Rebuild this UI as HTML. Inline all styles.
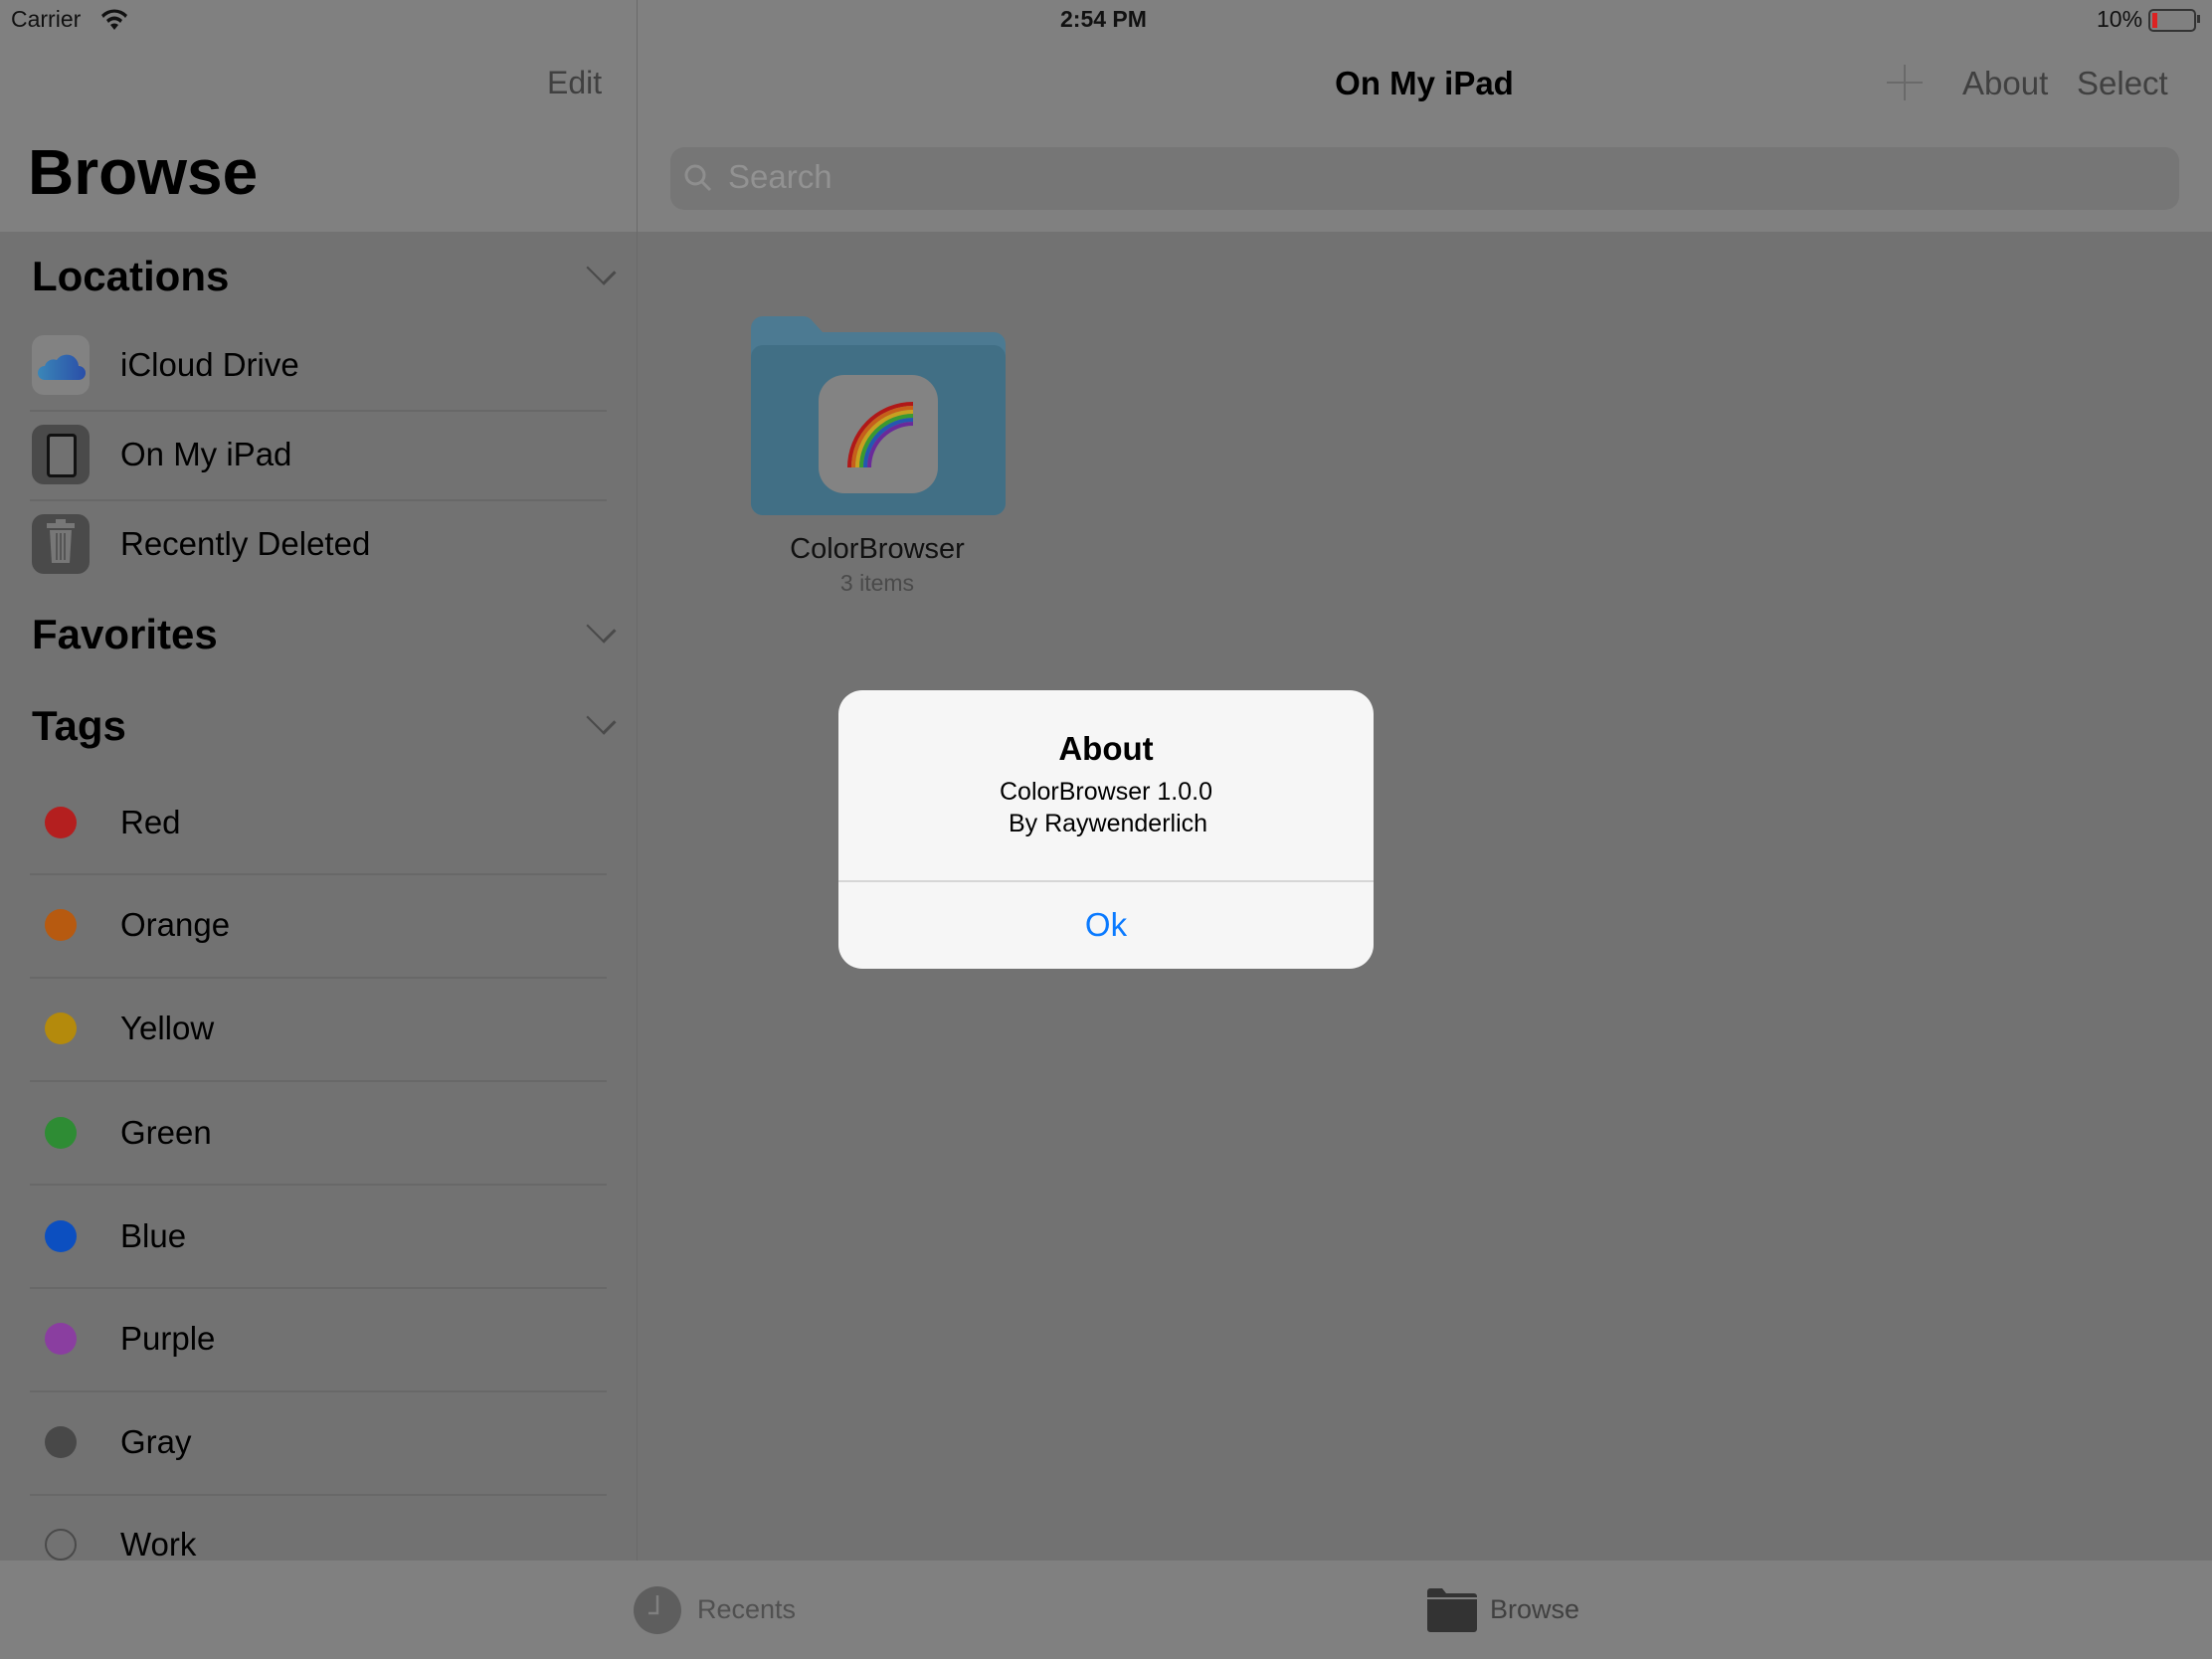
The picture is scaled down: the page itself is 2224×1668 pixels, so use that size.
<!DOCTYPE html>
<html><head><meta charset="utf-8"><style>
body{margin:0;width:2224px;height:1668px;position:relative;overflow:hidden;background:#727272;font-family:"Liberation Sans",sans-serif;}
.a{position:absolute;white-space:nowrap;}
.hdr{position:absolute;left:0;top:0;width:2224px;height:233px;background:#808080;}
.tab{position:absolute;left:0;top:1569px;width:2224px;height:99px;background:#808080;}
.vl{position:absolute;left:640px;top:0;width:1px;height:1569px;background:#6a6a6a;}
.sep{position:absolute;left:30px;width:580px;height:2px;background:#686868;}
.row{position:absolute;left:121px;font-size:33px;color:#000;transform:translateY(-50%);}
.dot{position:absolute;left:45px;width:32px;height:32px;border-radius:50%;transform:translateY(-50%);}
.sec{position:absolute;left:32px;font-size:42px;font-weight:bold;transform:translateY(-50%);}
.chev{position:absolute;left:592px;width:22px;height:22px;border-right:3px solid #4a4a4a;border-bottom:3px solid #4a4a4a;transform:translateY(-75%) rotate(45deg) scaleY(.7);}
.ic{position:absolute;left:32px;width:58px;height:60px;border-radius:12px;transform:translateY(-50%);}
</style></head><body>
<div class="hdr"></div>
<div class="tab"></div>
<div class="vl"></div>
<div class="a" style="left:11px;top:6px;font-size:23px;color:#111">Carrier</div>
<svg class="a" style="left:100px;top:8px" width="30" height="24" viewBox="0 0 30 24"><path d="M15 22l4-5a6 6 0 0 0-8 0z M7 12a11 11 0 0 1 16 0l-2 3a8 8 0 0 0-12 0z M2 7a18 18 0 0 1 26 0l-2 3a14 14 0 0 0-22 0z" fill="#111"/></svg>
<div class="a" style="left:1066px;top:6px;font-size:23px;font-weight:bold;color:#111">2:54 PM</div>
<div class="a" style="left:2108px;top:6px;font-size:23px;color:#111">10%</div>
<div class="a" style="left:2160px;top:9px;width:44px;height:19px;border:2px solid #333;border-radius:5px"></div>
<div class="a" style="left:2164px;top:13px;width:5px;height:15px;background:#d22"></div>
<div class="a" style="left:2209px;top:15px;width:3px;height:8px;background:#333"></div>
<div class="a" style="left:550px;top:65px;font-size:32px;color:#404040">Edit</div>
<div class="a" style="left:28px;top:136px;font-size:64px;font-weight:bold;color:#000">Browse</div>
<div class="a" style="left:1432px;top:65px;font-size:33px;font-weight:bold;color:#000;transform:translateX(-50%)">On My iPad</div>
<div class="a" style="left:1897px;top:82px;width:36px;height:2px;background:#6a6a6a"></div>
<div class="a" style="left:1914px;top:65px;width:2px;height:36px;background:#6a6a6a"></div>
<div class="a" style="left:1973px;top:65px;font-size:33px;color:#404040">About</div>
<div class="a" style="left:2088px;top:65px;font-size:33px;color:#404040">Select</div>
<div class="a" style="left:674px;top:148px;width:1517px;height:63px;border-radius:14px;background:#767676"></div>
<svg class="a" style="left:686px;top:163px" width="32" height="32" viewBox="0 0 32 32"><circle cx="13" cy="13" r="9" fill="none" stroke="#8e8e8e" stroke-width="3"/><path d="M20 20l8 8" stroke="#8e8e8e" stroke-width="3"/></svg>
<div class="a" style="left:732px;top:159px;font-size:33px;color:#929292">Search</div>

<div class="sec" style="top:278px">Locations</div><div class="chev" style="top:278px"></div>
<div class="ic" style="top:367px;background:#828282"></div>
<svg class="a" style="left:37px;top:350px" width="50" height="34" viewBox="0 0 50 34"><defs><linearGradient id="g" x1="0" x2="1"><stop offset="0" stop-color="#3a86b8"/><stop offset="1" stop-color="#2a4ea8"/></linearGradient></defs><path d="M8 32a7 7 0 0 1 0-14 9 9 0 0 1 12-6 12 12 0 0 1 22 6 7 7 0 0 1 0 14z" fill="url(#g)"/></svg>
<div class="row" style="top:367px">iCloud Drive</div>
<div class="sep" style="top:412px"></div>
<div class="ic" style="top:457px;background:#4a4a4a"></div>
<div class="a" style="left:47px;top:436px;width:24px;height:38px;border:3px solid #111;border-radius:4px;background:#717171"></div>
<div class="row" style="top:457px">On My iPad</div>
<div class="sep" style="top:502px"></div>
<div class="ic" style="top:547px;background:#4a4a4a"></div>
<svg class="a" style="left:46px;top:522px" width="30" height="46" viewBox="0 0 30 46"><rect x="1" y="4" width="28" height="5" fill="#777"/><rect x="10" y="0" width="10" height="5" fill="#777"/><path d="M4 11h22l-2 33H6z" fill="#777"/><path d="M11 14v27M15 14v27M19 14v27" stroke="#4a4a4a" stroke-width="1.5"/></svg>
<div class="row" style="top:547px">Recently Deleted</div>
<div class="sec" style="top:638px">Favorites</div><div class="chev" style="top:638px"></div>
<div class="sec" style="top:730px">Tags</div><div class="chev" style="top:730px"></div>

<div class="dot" style="top:827px;background:#b41f1f"></div><div class="row" style="top:827px">Red</div>
<div class="sep" style="top:878px"></div>
<div class="dot" style="top:930px;background:#b75a10"></div><div class="row" style="top:930px">Orange</div>
<div class="sep" style="top:982px"></div>
<div class="dot" style="top:1034px;background:#b48a0c"></div><div class="row" style="top:1034px">Yellow</div>
<div class="sep" style="top:1086px"></div>
<div class="dot" style="top:1139px;background:#2e8c34"></div><div class="row" style="top:1139px">Green</div>
<div class="sep" style="top:1190px"></div>
<div class="dot" style="top:1243px;background:#0c4fc0"></div><div class="row" style="top:1243px">Blue</div>
<div class="sep" style="top:1294px"></div>
<div class="dot" style="top:1346px;background:#8a3ea0"></div><div class="row" style="top:1346px">Purple</div>
<div class="sep" style="top:1398px"></div>
<div class="dot" style="top:1450px;background:#484848"></div><div class="row" style="top:1450px">Gray</div>
<div class="sep" style="top:1502px"></div>
<div class="dot" style="top:1553px;border:2px solid #4a4a4a;width:28px;height:28px"></div><div class="row" style="top:1553px">Work</div>

<svg class="a" style="left:755px;top:318px" width="256" height="200" viewBox="0 0 256 200"><path d="M0 12a12 12 0 0 1 12-12h40a12 12 0 0 1 10 5l10 11h172a12 12 0 0 1 12 12v160a12 12 0 0 1-12 12H12A12 12 0 0 1 0 188z" fill="#4c7a92"/><rect x="0" y="29" width="256" height="171" rx="12" fill="#416f85"/></svg>
<div class="a" style="left:823px;top:377px;width:120px;height:119px;border-radius:26px;background:#838383"></div>
<svg class="a" style="left:850px;top:402px" width="70" height="70" viewBox="0 0 70 70"><g fill="none" stroke-width="4"><path d="M4 68A64 64 0 0 1 68 4" stroke="#b01818"/><path d="M8 68A60 60 0 0 1 68 8" stroke="#c6601a"/><path d="M12 68A56 56 0 0 1 68 12" stroke="#c8a020"/><path d="M16 68A52 52 0 0 1 68 16" stroke="#3a9a30"/><path d="M20 68A48 48 0 0 1 68 20" stroke="#2458b0"/><path d="M24 68A44 44 0 0 1 68 24" stroke="#6a2a9a"/></g></svg>
<div class="a" style="left:882px;top:536px;font-size:29px;color:#111;transform:translateX(-50%)">ColorBrowser</div>
<div class="a" style="left:882px;top:573px;font-size:23px;color:#4a4a4a;transform:translateX(-50%)">3 items</div>

<div class="a" style="left:843px;top:694px;width:538px;height:280px;border-radius:24px;background:#f6f6f6"></div>
<div class="a" style="left:1112px;top:734px;font-size:33px;font-weight:bold;color:#000;transform:translateX(-50%)">About</div>
<div class="a" style="left:1112px;top:782px;font-size:25px;color:#000;transform:translateX(-50%)">ColorBrowser 1.0.0</div>
<div class="a" style="left:1114px;top:814px;font-size:25px;color:#000;transform:translateX(-50%)">By Raywenderlich</div>
<div class="a" style="left:843px;top:885px;width:538px;height:2px;background:#d6d6d6"></div>
<div class="a" style="left:1112px;top:911px;font-size:33px;color:#0a7aff;transform:translateX(-50%)">Ok</div>

<svg class="a" style="left:636px;top:1594px" width="50" height="50" viewBox="0 0 50 50"><circle cx="25" cy="25" r="24" fill="#5e5e5e"/><path d="M25 10v18h-9" stroke="#808080" stroke-width="2.5" fill="none"/></svg>
<div class="a" style="left:701px;top:1603px;font-size:27px;color:#505050">Recents</div>
<svg class="a" style="left:1435px;top:1597px" width="50" height="44" viewBox="0 0 50 44"><path d="M0 3a3 3 0 0 1 3-3h12l4 5h28a3 3 0 0 1 3 3v33a3 3 0 0 1-3 3H3a3 3 0 0 1-3-3z" fill="#333"/><rect x="0" y="9" width="50" height="2" fill="#808080"/></svg>
<div class="a" style="left:1498px;top:1603px;font-size:27px;color:#404040">Browse</div>
</body></html>
